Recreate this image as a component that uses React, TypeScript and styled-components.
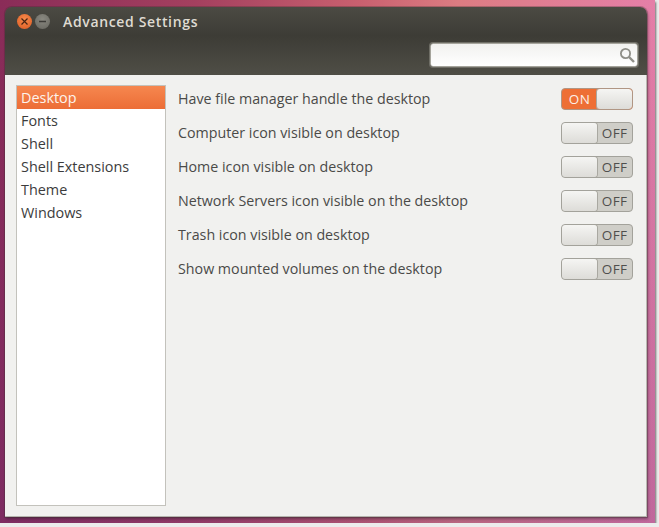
import { FunctionComponent } from 'react';
import styled, { createGlobalStyle } from 'styled-components';

const GlobalStyle = createGlobalStyle`
    html, body {
        margin: 0;
        padding: 0;
        background: #ececec;
    }
`;

const settings = [
    { label: 'Have file manager handle the desktop', on: true },
    { label: 'Computer icon visible on desktop', on: false },
    { label: 'Home icon visible on desktop', on: false },
    { label: 'Network Servers icon visible on the desktop', on: false },
    { label: 'Trash icon visible on desktop', on: false },
    { label: 'Show mounted volumes on the desktop', on: false },
];

const tweaks = ['Desktop', 'Fonts', 'Shell', 'Shell Extensions', 'Theme', 'Windows'];

const Switch: FunctionComponent<{ on: boolean }> = ({ on }) => (
    <SwitchTrack $on={on}>
        {on && <SwitchLabel $on>ON</SwitchLabel>}
        <SwitchThumb />
        {!on && <SwitchLabel $on={false}>OFF</SwitchLabel>}
    </SwitchTrack>
);

export default function App() {
    return (
        <>
            <GlobalStyle />
            <Desktop>
                <Window>
                    <TitleBar>
                        <WindowButton $close>
                            <svg width="9" height="9" viewBox="0 0 9 9">
                                <path d="M1.5 1.5 L7.5 7.5 M7.5 1.5 L1.5 7.5" stroke="#4a2412" strokeWidth="1.2" />
                            </svg>
                        </WindowButton>
                        <WindowButton>
                            <svg width="9" height="9" viewBox="0 0 9 9">
                                <path d="M1 4.5 H8" stroke="#3c3b37" strokeWidth="1.3" />
                            </svg>
                        </WindowButton>
                        <Title>Advanced Settings</Title>
                    </TitleBar>
                    <Toolbar>
                        <SearchBox>
                            <svg width="18" height="18" viewBox="0 0 18 18" fill="none">
                                <circle cx="7.5" cy="7.5" r="4.6" stroke="#8f8f88" strokeWidth="1.8" />
                                <path d="M11 11 L16 16" stroke="#8f8f88" strokeWidth="2.4" />
                            </svg>
                        </SearchBox>
                    </Toolbar>
                    <Content>
                        <Sidebar>
                            {tweaks.map((t, i) => (
                                <SidebarItem key={t} $active={i === 0}>{t}</SidebarItem>
                            ))}
                        </Sidebar>
                        <SettingsList>
                            {settings.map((s) => (
                                <SettingRow key={s.label}>
                                    <SettingLabel>{s.label}</SettingLabel>
                                    <Switch on={s.on} />
                                </SettingRow>
                            ))}
                        </SettingsList>
                    </Content>
                </Window>
            </Desktop>
        </>
    );
}

const Desktop = styled.div`
    width: 655px;
    height: 523px;
    box-sizing: border-box;
    padding: 7px 8px 6px 5px;
    overflow: hidden;
    background:
        linear-gradient(rgba(95, 45, 125, 0) 0%, rgba(95, 45, 125, 0.28) 100%),
        linear-gradient(to right, #8a2c58 0%, #a4405f 30%, #c9606f 55%, #dc7c82 70%, #e57fa8 100%);
    box-shadow: 1px 2px 2px #6d6d6d;
`;

const Window = styled.div`
    height: 510px;
    display: flex;
    flex-direction: column;
    border-radius: 7px 7px 0 0;
    overflow: hidden;
    box-shadow: 0 0 0 1px rgba(60, 50, 50, 0.3), 1px 2px 3px rgba(30, 20, 30, 0.4);
`;

const TitleBar = styled.div`
    height: 29px;
    display: flex;
    align-items: center;
    gap: 3px;
    padding: 0 0 0 12px;
    background: linear-gradient(#4b4a43, #3d3c36);
`;

const WindowButton = styled.div<{ $close?: boolean }>`
    width: 15px;
    height: 15px;
    border-radius: 50%;
    display: flex;
    align-items: center;
    justify-content: center;
    background: ${(p) =>
        p.$close
            ? 'radial-gradient(circle at 50% 35%, #f58a4b, #dd5a22)'
            : 'radial-gradient(circle at 50% 35%, #8a8981, #66655e)'};
`;

const Title = styled.div`
    margin-left: 10px;
    font-family: "Open Sans", sans-serif;
    font-size: 14px;
    font-weight: 600;
    letter-spacing: 0.65px;
    color: #dfdbd2;
`;

const Toolbar = styled.div`
    height: 39px;
    box-sizing: border-box;
    padding: 7px 9px 0 0;
    display: flex;
    justify-content: flex-end;
    align-items: flex-start;
    background: linear-gradient(#3d3c36, #4f4e46);
`;

const SearchBox = styled.div`
    width: 208px;
    height: 24px;
    box-sizing: border-box;
    padding-right: 1px;
    display: flex;
    align-items: center;
    justify-content: flex-end;
    background: linear-gradient(#f1f1ef, #ffffff);
    border: 1px solid #a5a49c;
    border-radius: 3px;
    box-shadow: 0 0 0 1px #6f6e66;
`;

const Content = styled.div`
    flex: 1;
    display: flex;
    box-sizing: border-box;
    padding: 10px 13px 10px 11px;
    background: #f1f1ef;
    border-right: 1px solid #b9b9b1;
    border-bottom: 1px solid #b5b5ad;
`;

const Sidebar = styled.div`
    width: 150px;
    box-sizing: border-box;
    background: #ffffff;
    border: 1px solid #c3c2bc;
    flex-shrink: 0;
`;

const SidebarItem = styled.div<{ $active: boolean }>`
    height: 23px;
    box-sizing: border-box;
    padding-left: 4px;
    display: flex;
    align-items: center;
    font-family: "Open Sans", sans-serif;
    font-size: 14.4px;
    color: ${(p) => (p.$active ? '#fdf3ec' : '#3c3c3c')};
    background: ${(p) => (p.$active ? 'linear-gradient(#f6874f, #ec6d36)' : 'transparent')};
`;

const SettingsList = styled.div`
    flex: 1;
    display: flex;
    flex-direction: column;
    gap: 12px;
    padding: 3px 0 0 12px;
`;

const SettingRow = styled.div`
    height: 22px;
    display: flex;
    align-items: center;
    justify-content: space-between;
`;

const SettingLabel = styled.div`
    padding-bottom: 2px;
    font-family: "Open Sans", sans-serif;
    font-size: 14.25px;
    color: #4a4a48;
`;

const SwitchTrack = styled.div<{ $on: boolean }>`
    width: 72px;
    height: 22px;
    box-sizing: border-box;
    display: flex;
    align-items: stretch;
    border: 1px solid ${(p) => (p.$on ? '#b09684' : '#a3a29b')};
    border-radius: 4px;
    overflow: hidden;
    background: ${(p) => (p.$on ? '#ee6f35' : '#cfcec8')};
`;

const SwitchThumb = styled.div`
    flex: 1;
    background: linear-gradient(#f5f5f3, #dddcd8);
    border-radius: 3px;
    box-shadow: 0 0 0 1px #a9a8a1;
`;

const SwitchLabel = styled.div<{ $on: boolean }>`
    width: 35px;
    flex-shrink: 0;
    display: flex;
    align-items: center;
    justify-content: center;
    font-family: "Open Sans", sans-serif;
    font-size: 13.5px;
    letter-spacing: 0.3px;
    color: ${(p) => (p.$on ? '#fdf0e8' : '#4f4f4d')};
`;
